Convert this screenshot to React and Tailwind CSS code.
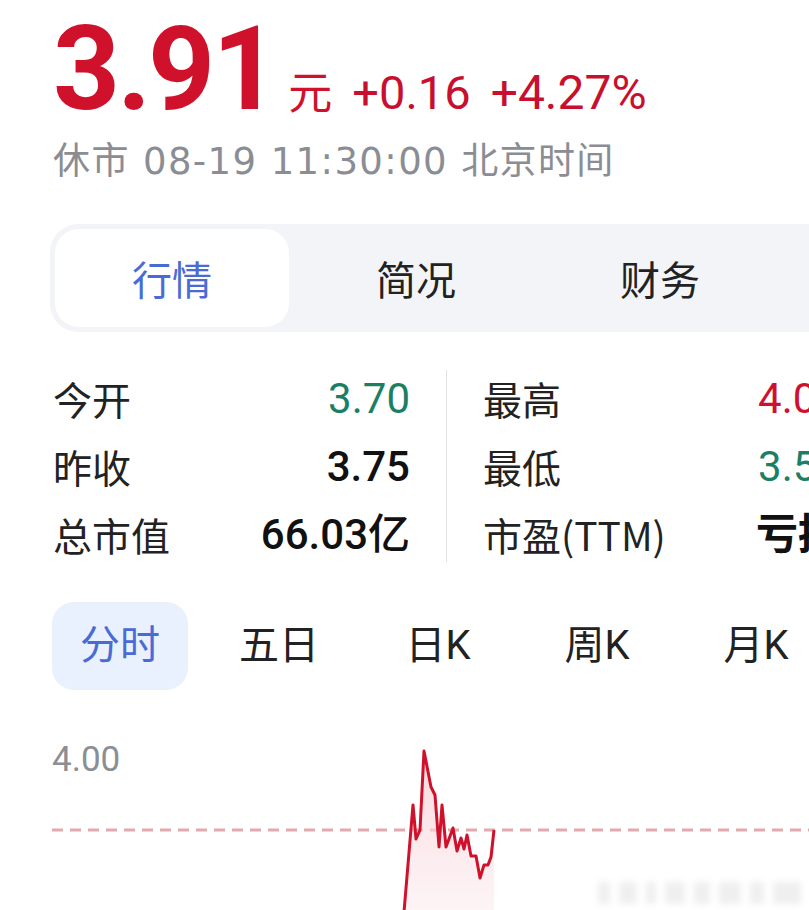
import React from "react";

const NUM = "font-['Roboto','Noto_Sans_CJK_SC',sans-serif]";
const CJK = "font-['Noto_Sans_CJK_SC','Noto_Sans',sans-serif]";

const stats = [
  [
    { label: "今开", value: "3.70", cls: "text-[#1b7f66] font-normal" },
    { label: "昨收", value: "3.75", cls: "text-[#111] font-medium" },
    { label: "总市值", value: "66.03亿", cls: "text-[#111] font-medium" },
  ],
  [
    { label: "最高", value: "4.00", cls: "text-[#cf1130] font-normal" },
    { label: "最低", value: "3.58", cls: "text-[#1b7f66] font-normal" },
    { label: "市盈(TTM)", value: "亏损", cls: "text-[#111] font-bold" },
  ],
];

const periods = ["分时", "五日", "日K", "周K", "月K"];

// 分时 line, chart coordinates (chart box starts at page y ~720)
const pts = [
  [404, 190], [413, 83], [416, 117], [420, 108], [424, 29], [431, 65], [435, 73],
  [439, 125], [442, 83], [446, 125], [453, 106], [457, 129], [461, 116], [464, 127],
  [467, 113], [471, 134], [476, 134], [480, 156], [484, 143], [488, 143], [491, 135], [494, 108],
];

function StatColumn({ items }) {
  return (
    <div className="flex w-[357px] shrink-0 flex-col">
      {items.map((s) => (
        <div key={s.label} className="flex h-[68px] items-center justify-between">
          <span className={`whitespace-nowrap text-[39px] text-[#222] ${CJK}`}>{s.label}</span>
          <span className={`whitespace-nowrap text-[42px] ${s.cls} ${NUM}`}>{s.value}</span>
        </div>
      ))}
    </div>
  );
}

function Chart() {
  const line = pts.map((p) => p.join(",")).join(" ");
  const area = `M404,190 L${line.replace(/ /g, " L")} L494,190 Z`;
  return (
    <div className="relative h-[190px] w-full">
      <div className={`absolute left-[52px] top-[20px] text-[35px] leading-none text-[#8b8e94] ${NUM}`}>4.00</div>
      <svg className="absolute left-0 top-0" width="809" height="190" viewBox="0 0 809 190">
        <defs>
          <linearGradient id="fill" x1="0" y1="0" x2="0" y2="1">
            <stop offset="0%" stopColor="#f5c9cf" stopOpacity="0.7" />
            <stop offset="100%" stopColor="#fbe9ec" stopOpacity="0.5" />
          </linearGradient>
        </defs>
        <line x1="52" y1="108" x2="809" y2="108" stroke="#e3a9ae" strokeWidth="3" strokeDasharray="11 7" />
        <path d={area} fill="url(#fill)" />
        <polyline points={line} fill="none" stroke="#d0112b" strokeWidth="3" strokeLinejoin="round" />
      </svg>
      {/* blurred watermark */}
      <div className="absolute right-[8px] top-[160px] flex items-center gap-[9px] blur-[3px]">
        {[12, 18, 10, 20, 16, 22, 14, 28].map((w, i) => (
          <div key={i} className="h-[22px] bg-[#efefef]" style={{ width: w }} />
        ))}
      </div>
    </div>
  );
}

export default function App() {
  return (
    <div className="h-[910px] w-[809px] overflow-hidden bg-white">
      <div className="pl-[53px] pt-[9px]">
        <div className="flex items-baseline text-[#d0112b]">
          <span className={`text-[117px] font-bold leading-[120px] tracking-[-3px] ${NUM}`}>3.91</span>
          <span className={`ml-[12px] text-[44px] leading-none ${CJK}`}>元</span>
          <span className={`ml-[20px] text-[47px] leading-none text-[#c8102e] ${NUM}`}>+0.16</span>
          <span className={`ml-[20px] text-[48px] leading-none text-[#c8102e] ${NUM}`}>+4.27%</span>
        </div>
        <div className="mt-[11px] whitespace-nowrap font-['DejaVu_Sans','Noto_Sans_CJK_SC',sans-serif] text-[37px] leading-[44px] tracking-[1.4px] text-[#8a8d93]">
          休市 08-19 11:30:00 北京时间
        </div>
      </div>

      <div className="ml-[50px] mt-[40px] flex h-[108px] w-[800px] rounded-l-[28px] bg-[#f3f4f8] p-[5px]">
        <div className={`flex w-[234px] items-center justify-center rounded-[24px] bg-white text-[40px] text-[#4a6bd6] ${CJK}`}>
          行情
        </div>
        <div className={`flex w-[254px] items-center justify-center text-[40px] text-[#222] ${CJK}`}>简况</div>
        <div className={`flex w-[234px] items-center justify-center text-[40px] text-[#222] ${CJK}`}>财务</div>
      </div>

      <div className="mt-[32px] flex pl-[53px]">
        <StatColumn items={stats[0]} />
        <div className="mx-[36px] my-[6px] w-px shrink-0 bg-[#e2e2e2]" />
        <StatColumn items={stats[1]} />
      </div>

      <div className="mt-[34px] flex gap-[23px] pl-[52px]">
        {periods.map((p, i) => (
          <div
            key={p}
            className={`flex h-[88px] w-[136px] shrink-0 items-center justify-center rounded-[22px] text-[40px] ${NUM} ${
              i === 0 ? "bg-[#e8f1fd] text-[#4a6bd6]" : "text-[#222]"
            }`}
          >
            {p}
          </div>
        ))}
      </div>

      <div className="mt-[32px]">
        <Chart />
      </div>
    </div>
  );
}
